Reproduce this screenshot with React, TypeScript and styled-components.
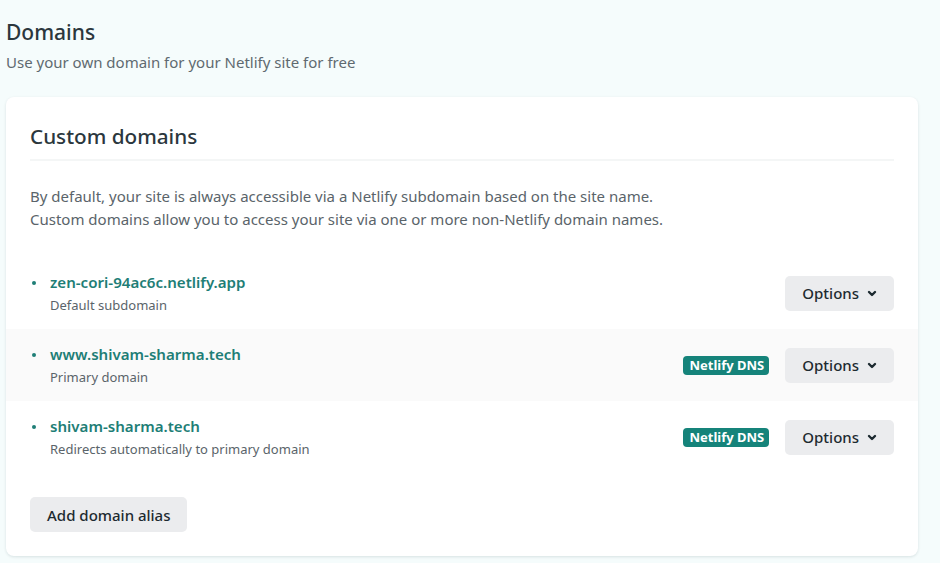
import styled, { createGlobalStyle } from "styled-components";

const GlobalStyle = createGlobalStyle`
  body {
    margin: 0;
    background: #f5fcfc;
    font-family: "Noto Sans", "Open Sans", sans-serif;
    color: #2e3a40;
  }
`;

type Domain = {
  name: string;
  note: string;
  dns: boolean;
};

const domains: Domain[] = [
  { name: "zen-cori-94ac6c.netlify.app", note: "Default subdomain", dns: false },
  { name: "www.shivam-sharma.tech", note: "Primary domain", dns: true },
  { name: "shivam-sharma.tech", note: "Redirects automatically to primary domain", dns: true },
];

const Chevron = () => (
  <svg width="10" height="10" viewBox="0 0 10 10">
    <path d="M2 4 L5 7 L8 4" fill="none" stroke="#1d2a30" strokeWidth="2.4" strokeLinecap="round" strokeLinejoin="round" />
  </svg>
);

const App = () => {
  return (
    <Page>
      <GlobalStyle />
      <PageHeader>
        <Title>Domains</Title>
        <Subtitle>Use your own domain for your Netlify site for free</Subtitle>
      </PageHeader>
      <Card>
        <CardHead>
          <CardTitle>Custom domains</CardTitle>
        </CardHead>
        <Description>
          By default, your site is always accessible via a Netlify subdomain based on the site name.
          <br />
          Custom domains allow you to access your site via one or more non-Netlify domain names.
        </Description>
        <DomainList>
          {domains.map((d, i) => (
            <DomainRow key={d.name} shaded={i % 2 === 1}>
              <DomainInfo>
                <DomainName>{d.name}</DomainName>
                <DomainNote>{d.note}</DomainNote>
              </DomainInfo>
              <RowActions>
                {d.dns && <DnsBadge>Netlify DNS</DnsBadge>}
                <GrayButton>
                  Options <Chevron />
                </GrayButton>
              </RowActions>
            </DomainRow>
          ))}
        </DomainList>
        <CardFooter>
          <GrayButton>Add domain alias</GrayButton>
        </CardFooter>
      </Card>
    </Page>
  );
};

const Page = styled.div`
  width: 940px;
  height: 563px;
  overflow: hidden;
  padding: 0 22px 0 6px;
  box-sizing: border-box;
`;

const PageHeader = styled.div`
  padding-top: 18px;
  height: 97px;
  box-sizing: border-box;
`;

const Title = styled.h1`
  margin: 0;
  font-size: 21px;
  font-weight: 500;
  line-height: 28px;
  color: #2b373d;
`;

const Subtitle = styled.p`
  margin: 6px 0 0;
  font-size: 15px;
  line-height: 20px;
  color: #5f6a70;
`;

const Card = styled.section`
  background: #fff;
  border-radius: 8px;
  box-shadow: 0 1px 3px rgba(0, 40, 50, 0.12);
  padding: 0 0 24px;
`;

const CardHead = styled.div`
  margin: 0 24px;
  padding: 25px 0 9px;
  border-bottom: 2px solid #f4f6f6;
`;

const CardTitle = styled.h2`
  margin: 0;
  font-size: 20.7px;
  font-weight: 500;
  line-height: 28px;
  color: #2b373d;
`;

const Description = styled.p`
  margin: 24px 24px 26px;
  font-size: 15px;
  line-height: 23px;
  color: #5a646a;
`;

const DomainList = styled.ul`
  list-style: none;
  margin: 0;
  padding: 0;
`;

const DomainRow = styled.li<{ shaded: boolean }>`
  display: flex;
  align-items: center;
  justify-content: space-between;
  height: 72px;
  padding: 0 24px 0 44px;
  background: ${(p) => (p.shaded ? "#fafafa" : "transparent")};
  position: relative;

  &::before {
    content: "";
    position: absolute;
    left: 26px;
    top: 24px;
    width: 4px;
    height: 4px;
    border-radius: 50%;
    background: #1e7e76;
  }
`;

const DomainInfo = styled.div`
  display: flex;
  flex-direction: column;
  gap: 4px;
`;

const DomainName = styled.a`
  font-size: 15.1px;
  font-weight: 600;
  line-height: 20px;
  color: #1e7e76;
`;

const DomainNote = styled.span`
  font-size: 13px;
  line-height: 18px;
  color: #5a646a;
`;

const RowActions = styled.div`
  display: flex;
  align-items: center;
  gap: 16px;
`;

const DnsBadge = styled.span`
  background: #15837a;
  color: #fff;
  font-size: 13px;
  font-weight: 700;
  line-height: 19px;
  padding: 0 5px 0 6px;
  border-radius: 4px;
`;

const GrayButton = styled.button`
  display: inline-flex;
  align-items: center;
  gap: 8px;
  height: 35px;
  padding: 0 17px;
  border: none;
  border-radius: 5px;
  background: #ebecee;
  font-family: inherit;
  font-size: 15px;
  font-weight: 500;
  color: #1d2a30;
`;

const CardFooter = styled.div`
  padding: 24px 24px 0;
`;

export default App;
